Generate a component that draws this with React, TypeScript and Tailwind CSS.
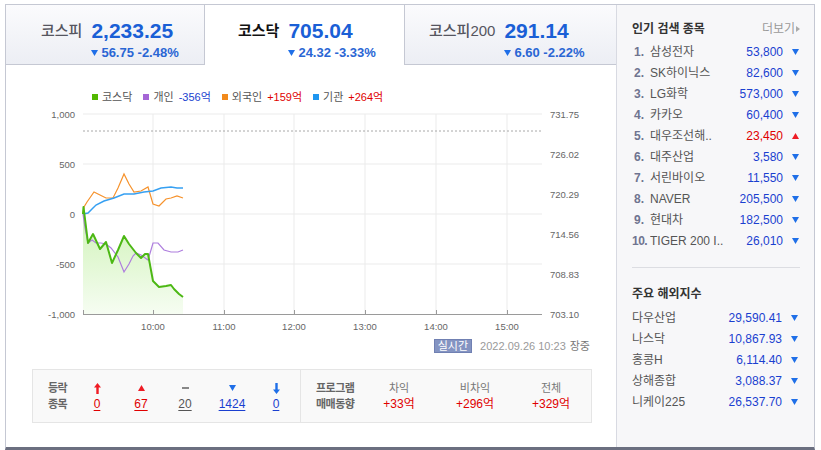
import React from 'react'

const popular = [
  { rank: 1, name: '삼성전자', value: '53,800', up: false },
  { rank: 2, name: 'SK하이닉스', value: '82,600', up: false },
  { rank: 3, name: 'LG화학', value: '573,000', up: false },
  { rank: 4, name: '카카오', value: '60,400', up: false },
  { rank: 5, name: '대우조선해..', value: '23,450', up: true },
  { rank: 6, name: '대주산업', value: '3,580', up: false },
  { rank: 7, name: '서린바이오', value: '11,550', up: false },
  { rank: 8, name: 'NAVER', value: '205,500', up: false },
  { rank: 9, name: '현대차', value: '182,500', up: false },
  { rank: 10, name: 'TIGER 200 I..', value: '26,010', up: false },
]

const overseas = [
  { name: '다우산업', value: '29,590.41' },
  { name: '나스닥', value: '10,867.93' },
  { name: '홍콩H', value: '6,114.40' },
  { name: '상해종합', value: '3,088.37' },
  { name: '니케이225', value: '26,537.70' },
]

const green = [
  [82, 214], [82.5, 207], [87, 243], [92, 234], [99, 249], [105, 242], [111, 263], [117, 250],
  [123, 236], [128, 244], [135, 253], [140, 258], [144, 254], [147, 254], [152, 281], [158, 287],
  [165, 286], [170, 285], [173, 289], [178, 294], [182, 297],
]
const purple = [
  [82, 214], [84, 228], [87, 243], [91, 240], [95, 243], [100, 243], [105, 244], [110, 248],
  [117, 257], [123, 272], [128, 264], [132, 256], [135, 253], [140, 255], [147, 260], [150, 250],
  [152, 243], [157, 243], [163, 250], [170, 252], [177, 252], [182, 250],
]
const orange = [
  [82, 214], [83, 207], [86, 202], [93, 192], [99, 195], [105, 198], [112, 198], [117, 188],
  [123, 174], [128, 184], [133, 192], [140, 191], [147, 187], [152, 204], [158, 206], [165, 199],
  [170, 198], [176, 196], [182, 198],
]
const blue = [
  [82, 214], [87, 213], [91, 209], [95, 205], [103, 201], [113, 198], [123, 194], [133, 194],
  [143, 192], [152, 191], [160, 188], [170, 187], [176, 188], [182, 188],
]

const pts = (a: number[][]) => a.map(p => p.join(',')).join(' ')

function Down({ className = '' }: { className?: string }) {
  return (
    <svg width="7" height="6" viewBox="0 0 7 6" className={className}>
      <polygon points="0,0 7,0 3.5,6" fill="#1f6fe8" />
    </svg>
  )
}

function Up() {
  return (
    <svg width="7" height="6" viewBox="0 0 7 6">
      <polygon points="0,6 7,6 3.5,0" fill="#ee1c25" />
    </svg>
  )
}

function Tab({ label, value, change, active, pad, border }: {
  label: string; value: string; change: string; active?: boolean; pad: string; border: string
}) {
  return (
    <div
      className={`h-[60px] flex items-start pt-[14px] ${pad} ${border} ${
        active ? 'bg-white' : 'bg-gradient-to-b from-[#fbfbfd] to-[#eceef4] border-b border-[#c5c8d3]'
      }`}
    >
      <span className={`text-[15px] leading-[24px] mr-[9px] ${active ? 'font-bold text-[#111]' : 'font-medium text-[#55555f]'}`}>
        {label}
      </span>
      <div className="flex flex-col">
        <span className="text-[21px] leading-[24px] font-bold text-[#1a5fd6]">{value}</span>
        <span className="flex items-center gap-[3px] text-[13px] leading-[14px] font-bold text-[#2a66d4] mt-[3px]">
          <Down />
          {change}
        </span>
      </div>
    </div>
  )
}

function Chart() {
  const hours = [
    [152, '10:00'], [223, '11:00'], [293, '12:00'], [364, '13:00'], [435, '14:00'], [506, '15:00'],
  ] as const
  const left = [[114, '1,000'], [164, '500'], [214, '0'], [264, '-500'], [314, '-1,000']] as const
  const right = [[114, '731.75'], [154, '726.02'], [194, '720.29'], [234, '714.56'], [274, '708.83'], [314, '703.10']] as const
  return (
    <svg width="610" height="232" viewBox="5 105 610 232" className="block">
      <defs>
        <linearGradient id="gfill" x1="0" y1="0" x2="0" y2="1">
          <stop offset="0" stopColor="#cdf2b4" />
          <stop offset="1" stopColor="#f6fdf2" />
        </linearGradient>
      </defs>
      {[114, 164, 214, 264].map(y => (
        <line key={y} x1="82" x2="541" y1={y} y2={y} stroke="#ebebeb" />
      ))}
      {hours.map(([x]) => (
        <line key={x} x1={x} x2={x} y1="114" y2="314" stroke="#ebebeb" />
      ))}
      <line x1="82" x2="541" y1="131" y2="131" stroke="#a8a8a8" strokeDasharray="2 2" />
      <polygon points={`${pts(green)} 182,314 82,314`} fill="url(#gfill)" />
      <polyline points={pts(orange)} fill="none" stroke="#f6922c" strokeWidth="1.2" />
      <polyline points={pts(blue)} fill="none" stroke="#36a0f2" strokeWidth="1.5" />
      <polyline points={pts(purple)} fill="none" stroke="#ae7ede" strokeWidth="1.2" />
      <polyline points={pts(green)} fill="none" stroke="#4cb814" strokeWidth="2" strokeLinejoin="round" />
      <line x1="82" x2="541" y1="314.5" y2="314.5" stroke="#9a9a9a" />
      {[82, ...hours.map(h => h[0])].map(x => (
        <line key={x} x1={x + 0.5} x2={x + 0.5} y1="310" y2="314" stroke="#9a9a9a" />
      ))}
      {left.map(([y, t]) => (
        <text key={t} x="74" y={y + 3.5} textAnchor="end" fontSize="9.5" fill="#666" fontFamily="Liberation Sans">
          {t}
        </text>
      ))}
      {right.map(([y, t]) => (
        <text key={t} x="549" y={y + 3.5} fontSize="9.5" fill="#666" fontFamily="Liberation Sans">
          {t}
        </text>
      ))}
      {hours.map(([x, t]) => (
        <text key={t} x={x} y="330" textAnchor="middle" fontSize="9.5" fill="#666" fontFamily="Liberation Sans">
          {t}
        </text>
      ))}
    </svg>
  )
}

function Legend({ color, label, value, valueColor }: { color: string; label: string; value?: string; valueColor?: string }) {
  return (
    <span className="flex items-center mr-[11px]">
      <span className={`w-[6px] h-[6px] mr-[4px] ${color}`} />
      <span className="text-[#555]">{label}</span>
      {value && <span className={`ml-[5px] ${valueColor}`}>{value}</span>}
    </span>
  )
}

function ArrowIcon({ color, down }: { color: string; down?: boolean }) {
  return (
    <svg width="7" height="11" viewBox="0 0 7 11" style={{ transform: down ? 'rotate(180deg)' : undefined }}>
      <polygon points="3.5,0 7,4.5 4.7,4.5 4.7,11 2.3,11 2.3,4.5 0,4.5" fill={color} />
    </svg>
  )
}

export default function App() {
  return (
    <div className="font-['Liberation_Sans','Noto_Sans_CJK_KR',sans-serif] bg-white w-[821px] h-[450px] pt-[4px] pl-[5px]">
      <div className="w-[810px] h-[446px] flex border-t border-l border-r border-[#c5c8d3] border-b-[3px] border-b-[#6b6f80]">
        {/* left column */}
        <div className="w-[610px] flex flex-col">
          <div className="flex">
            <div className="w-[199px]">
              <Tab label="코스피" value="2,233.25" change="56.75 -2.48%" pad="pl-[35px]" border="border-r border-[#c5c8d3]" />
            </div>
            <div className="w-[199px]">
              <Tab label="코스닥" value="705.04" change="24.32 -3.33%" active pad="pl-[33px]" border="" />
            </div>
            <div className="w-[212px]">
              <Tab label="코스피200" value="291.14" change="6.60 -2.22%" pad="pl-[24px]" border="border-l border-[#c5c8d3]" />
            </div>
          </div>

          <div className="h-[40px] pt-[23px] pl-[86px] flex text-[11px] leading-[16px]">
            <Legend color="bg-[#52b800]" label="코스닥" />
            <Legend color="bg-[#a566d6]" label="개인" value="-356억" valueColor="text-[#1a3fd0]" />
            <Legend color="bg-[#f28a1b]" label="외국인" value="+159억" valueColor="text-[#e00000]" />
            <Legend color="bg-[#1e96f0]" label="기관" value="+264억" valueColor="text-[#e00000]" />
          </div>

          <Chart />

          <div className="h-[22px] pt-[2px] flex items-start justify-end pr-[26px] text-[11px] leading-[14px]">
            <span className="h-[14px] px-[3px] bg-[#8494c2] border border-[#7080b2] text-white leading-[12px] text-[11px]">실시간</span>
            <span className="ml-[8px] text-[#9a9a9a]">2022.09.26 10:23</span>
            <span className="ml-[4px] text-[#777]">장중</span>
          </div>

          <div className="mt-[10px] ml-[26px] w-[560px] h-[54px] flex bg-[#f9f9f9] border border-[#e5e5e5]">
            <div className="w-[268px] flex items-center pl-[15px] border-r border-[#e5e5e5]">
              <div className="w-[27px] text-[11px] leading-[16px] font-bold text-[#666] tracking-[-0.5px]">
                <div>등락</div>
                <div>종목</div>
              </div>
              {[
                { w: 'w-[44px]', icon: <ArrowIcon color="#f01c24" />, n: '0', c: 'text-[#e00000] decoration-[#e00000]' },
                { w: 'w-[44px]', icon: <Up />, n: '67', c: 'text-[#e00000] decoration-[#e00000]' },
                { w: 'w-[44px]', icon: <span className="block w-[7px] h-[2px] bg-[#888]" />, n: '20', c: 'text-[#555] decoration-[#555]' },
                { w: 'w-[50px]', icon: <Down />, n: '1424', c: 'text-[#1a3fd0] decoration-[#1a3fd0]' },
                { w: 'w-[38px]', icon: <ArrowIcon color="#1f6fe8" down />, n: '0', c: 'text-[#1a3fd0] decoration-[#1a3fd0]' },
              ].map((col, i) => (
                <div key={i} className={`${col.w} flex flex-col items-center text-[12px] leading-[16px]`}>
                  <div className="h-[16px] flex items-center">{col.icon}</div>
                  <span className={`underline underline-offset-2 ${col.c}`}>{col.n}</span>
                </div>
              ))}
            </div>
            <div className="flex-1 flex items-center pl-[15px]">
              <div className="w-[45px] text-[11px] leading-[16px] font-bold text-[#666] tracking-[-0.5px]">
                <div>프로그램</div>
                <div>매매동향</div>
              </div>
              {[
                ['차익', '+33억'],
                ['비차익', '+296억'],
                ['전체', '+329억'],
              ].map(([l, v]) => (
                <div key={l} className="w-[76px] flex flex-col items-center leading-[16px]">
                  <span className="text-[11px] text-[#777]">{l}</span>
                  <span className="text-[12px] text-[#e00000]">{v}</span>
                </div>
              ))}
            </div>
          </div>
        </div>

        {/* right column */}
        <div className="w-[199px] bg-[#f7f7f9] border-l border-[#d8dae2] pl-[15px] pr-[14px]">
          <div className="mt-[13px] h-[21px] flex items-center justify-between text-[12px]">
            <span className="font-bold text-[#333]">인기 검색 종목</span>
            <span className="flex items-center text-[#9a9a9a]">
              더보기
              <svg width="4" height="6" viewBox="0 0 4 6" className="ml-[1px]">
                <polygon points="0,0 4,3 0,6" fill="#aaa" />
              </svg>
            </span>
          </div>
          <div className="mt-[2px]">
            {popular.map(p => (
              <div key={p.rank} className="h-[21px] flex items-center text-[12px]">
                <span className={`w-[18px] font-bold text-[#6f7490] ${p.rank < 10 ? 'pl-[2px]' : 'tracking-[-0.5px]'}`}>{p.rank}.</span>
                <span className="flex-1 text-[#555] truncate">{p.name}</span>
                <span className={p.up ? 'text-[#e00000]' : 'text-[#1a3fd0]'}>{p.value}</span>
                <span className="w-[17px] flex justify-end pr-[1px]">{p.up ? <Up /> : <Down />}</span>
              </div>
            ))}
          </div>
          <div className="mt-[16px] h-px bg-[#dcdde2]" />
          <div className="mt-[15px] h-[21px] flex items-center text-[12px] font-bold text-[#333]">주요 해외지수</div>
          <div className="mt-[3px]">
            {overseas.map(o => (
              <div key={o.name} className="h-[21px] flex items-center text-[12px]">
                <span className="flex-1 text-[#555]">{o.name}</span>
                <span className="text-[#1a3fd0]">{o.value}</span>
                <span className="w-[18px] flex justify-end pr-[2px]"><Down /></span>
              </div>
            ))}
          </div>
        </div>
      </div>
    </div>
  )
}
